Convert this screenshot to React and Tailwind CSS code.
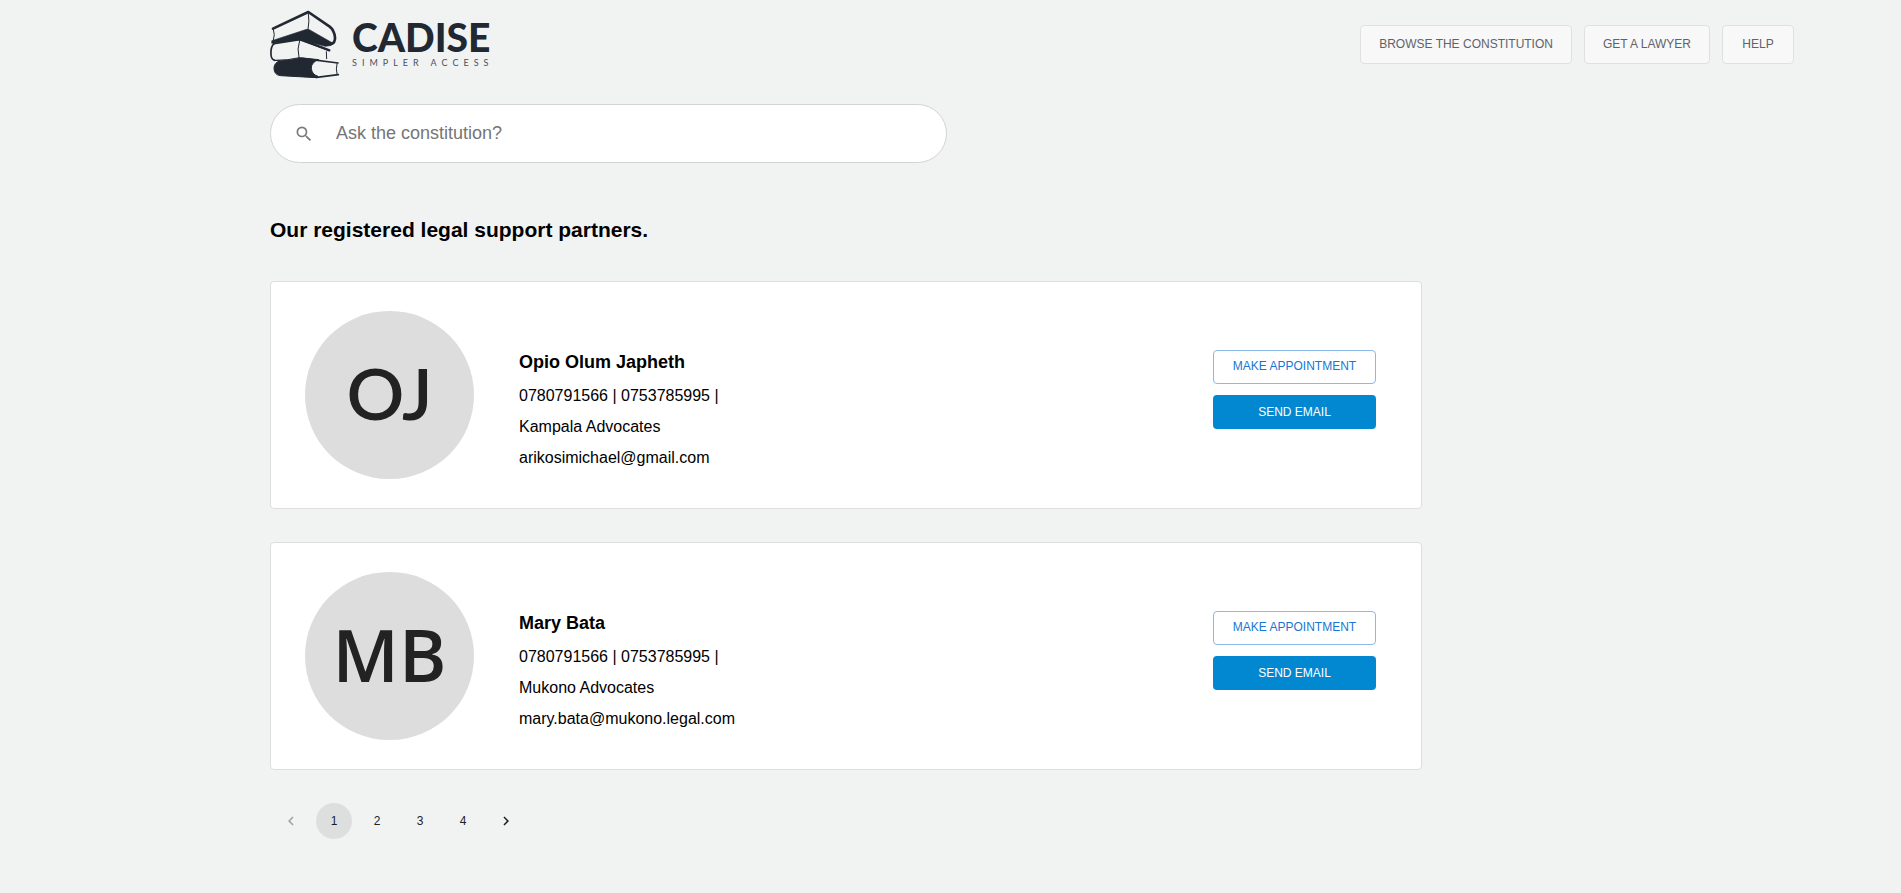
import React from "react";
import { MdSearch, MdNavigateBefore, MdNavigateNext } from "react-icons/md";

const partners = [
  {
    initials: "OJ",
    avatarFont: "font-[Lato,sans-serif] pb-1.5",
    name: "Opio Olum Japheth",
    phones: "0780791566 | 0753785995 |",
    firm: "Kampala Advocates",
    email: "arikosimichael@gmail.com",
  },
  {
    initials: "MB",
    avatarFont: "font-['Open_Sans',sans-serif] pb-1",
    name: "Mary Bata",
    phones: "0780791566 | 0753785995 |",
    firm: "Mukono Advocates",
    email: "mary.bata@mukono.legal.com",
  },
];

const navLinks = ["Browse the constitution", "Get a lawyer", "Help"];
const pages = [1, 2, 3, 4];

function BooksMark() {
  return (
    <svg viewBox="21 14 213 213" className="size-[71px]" fill="none" stroke="#212832" strokeLinejoin="round" strokeLinecap="round" aria-hidden="true">
      {/* top book */}
      <path d="M33 73 L139 23 L203 67 Q217 78 219 100 Q220 116 206 120" strokeWidth="8" />
      <path d="M139 26 Q143 50 138 76" strokeWidth="3" />
      <path d="M34 74 Q40 92 34 108" strokeWidth="3" />
      <path d="M30 109 L134 75 L142 76 L208 114 L216 116 Q208 126 190 126 L113 106 L30 117 Z" fill="#212832" strokeWidth="2" />
      {/* middle book */}
      <path d="M36 118 Q25 128 27 152 Q28 165 38 168" strokeWidth="5" />
      <path d="M36 118 L113 106 L201 138" strokeWidth="5" />
      <path d="M130 110 L202 138" strokeWidth="7" />
      <path d="M113 108 Q104 134 111 160" strokeWidth="3" />
      <path d="M193 142 L194 163" strokeWidth="3" />
      {/* bottom book */}
      <path d="M38 168 Q80 168 112 160 L170 166 Q147 174 148 192 Q149 210 168 216 L164 220 L56 214 Q36 212 36 192 Q36 176 52 170 Z" fill="#212832" strokeWidth="3" />
      <path d="M120 162 L228 176" strokeWidth="5" />
      <path d="M164 219 L229 211" strokeWidth="5" />
      <path d="M225 178 Q221 194 225 209" strokeWidth="3" />
    </svg>
  );
}

function Logo() {
  return (
    <a href="#" aria-label="Cadise home" className="flex items-center gap-3 text-[#212832]">
      <BooksMark />
      <span className="flex flex-col pb-1.5">
        <span className="font-[Lato,sans-serif] text-[39px] leading-[42px] font-black">CADISE</span>
        <span className="font-[Lato,sans-serif] text-[9px] leading-[10px] tracking-[5px] text-[#4a505a]">SIMPLER ACCESS</span>
      </span>
    </a>
  );
}

function PartnerCard({ partner }) {
  return (
    <article className="flex items-start rounded-sm border border-[#dedede] bg-white py-[29px] pr-[45px] pl-[34px]">
      <div
        className={`flex h-[168px] w-[169px] shrink-0 items-center justify-center rounded-full bg-[#dddddd] text-[72px] leading-none font-semibold text-[#222222] ${partner.avatarFont}`}
      >
        {partner.initials}
      </div>
      <div className="ml-[45px] flex-1 pt-[37px] text-base leading-[31px]">
        <h2 className="mb-1 text-lg leading-7 font-bold">{partner.name}</h2>
        <p>{partner.phones}</p>
        <p>{partner.firm}</p>
        <p>{partner.email}</p>
      </div>
      <div className="flex w-[163px] flex-col gap-[11px] pt-[39px] text-xs">
        <button type="button" className="h-[34px] rounded border border-[#8bb9e8] pb-0.5 text-[#1976d2] uppercase">
          Make appointment
        </button>
        <button type="button" className="h-[34px] rounded bg-[#0288d1] font-medium text-white uppercase">
          Send email
        </button>
      </div>
    </article>
  );
}

export default function App() {
  return (
    <div className="min-h-screen bg-[#f0f3f2] pr-[107px] pl-[269px] font-['Liberation_Sans',Arial,sans-serif] text-black">
      <header className="flex h-[89px] items-center justify-between">
        <Logo />
        <nav className="flex gap-3">
          {navLinks.map((label) => (
            <a
              key={label}
              href="#"
              className="flex h-[39px] min-w-[72px] items-center justify-center rounded border border-[#dfe1e1] bg-[#f8f8f8] px-[18px] pb-0.5 text-xs text-[#5f6368] uppercase"
            >
              {label}
            </a>
          ))}
        </nav>
      </header>

      <main className="ml-px max-w-6xl">
        <label className="mt-[15px] flex h-[59px] max-w-[677px] items-center gap-[22px] rounded-full border border-[#d2d4d4] bg-white px-[23px]">
          <MdSearch className="size-5 shrink-0 text-[#7a7a7a]" aria-hidden="true" />
          <input
            type="search"
            aria-label="Ask the constitution"
            placeholder="Ask the constitution?"
            className="min-w-0 flex-1 bg-transparent pb-0.5 text-lg outline-none placeholder:text-[#757575]"
          />
        </label>

        <h1 className="mt-[51px] mb-[35px] text-[21px] leading-8 font-bold">Our registered legal support partners.</h1>

        <div className="flex flex-col gap-[33px]">
          {partners.map((partner) => (
            <PartnerCard key={partner.name} partner={partner} />
          ))}
        </div>

        <nav aria-label="Pagination" className="mt-[33px] ml-[3px] flex gap-[7px] text-xs text-[#1f1f1f]">
          <button type="button" disabled aria-label="Previous page" className="flex size-9 items-center justify-center text-[#9fa1a0]">
            <MdNavigateBefore className="size-[18px]" />
          </button>
          {pages.map((page) => (
            <button
              key={page}
              type="button"
              aria-current={page === 1 ? "page" : undefined}
              className={page === 1 ? "size-9 rounded-full bg-[#dddfde]" : "size-9 rounded-full"}
            >
              {page}
            </button>
          ))}
          <button type="button" aria-label="Next page" className="flex size-9 items-center justify-center">
            <MdNavigateNext className="size-[18px]" />
          </button>
        </nav>
      </main>
    </div>
  );
}
